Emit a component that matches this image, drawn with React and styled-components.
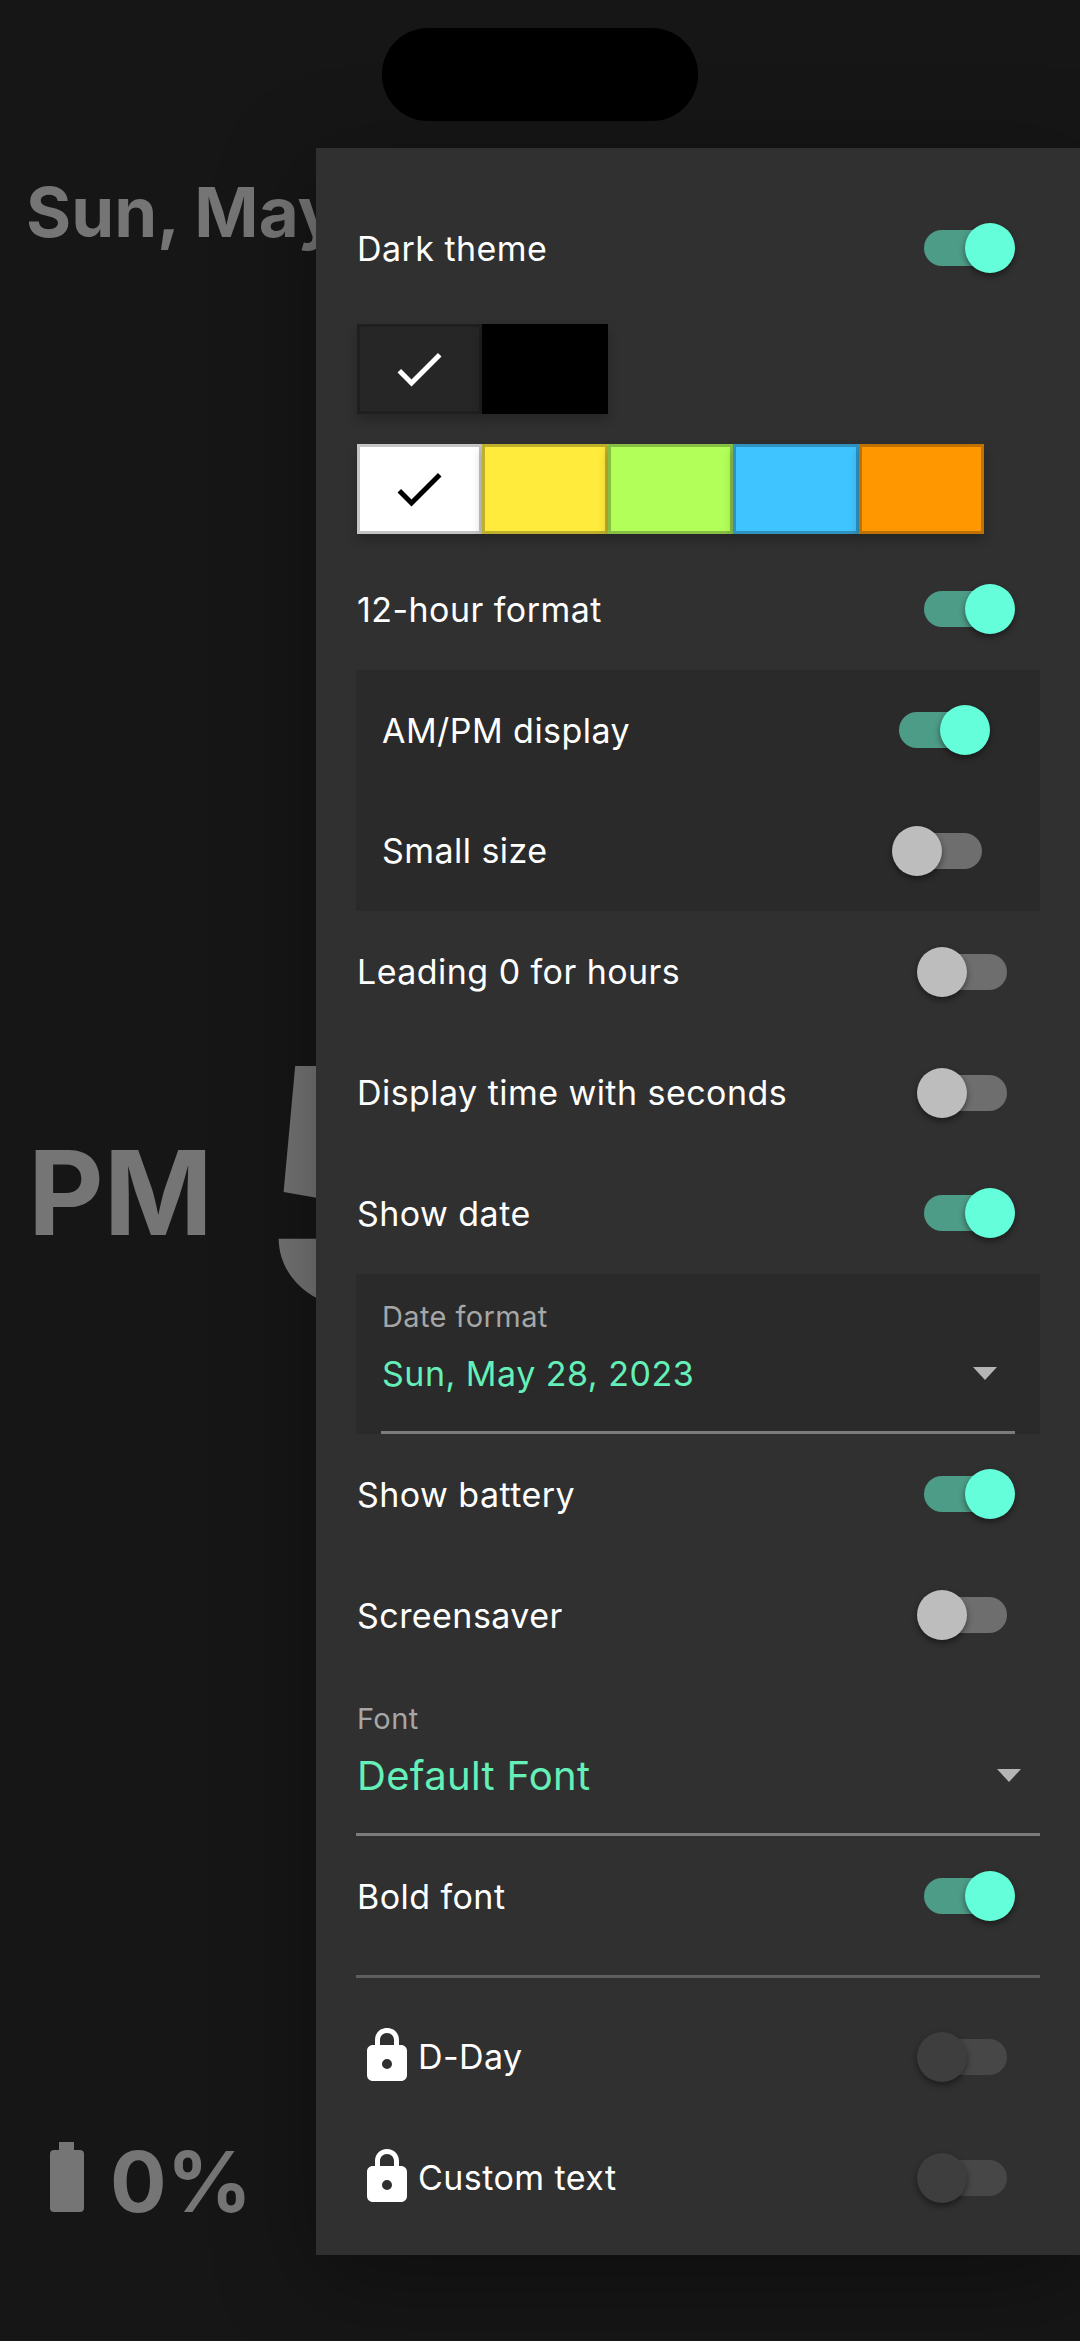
import React from 'react'
import styled, { createGlobalStyle } from 'styled-components'

const GlobalStyle = createGlobalStyle`
  body {
    margin: 0;
    background: #161616;
    font-family: 'Inter', 'Liberation Sans', sans-serif;
  }
`

const Page = styled.div`
  position: relative;
  width: 1080px;
  height: 2341px;
  overflow: hidden;
  background: #161616;
`

const Notch = styled.div`
  position: absolute;
  top: 28px;
  left: 382px;
  width: 316px;
  height: 93px;
  border-radius: 46px;
  background: #000;
`

const ClockFace = styled.div`
  height: 100%;
  box-sizing: border-box;
  padding: 170px 0 129px 28px;
  display: flex;
  flex-direction: column;
  justify-content: space-between;
  color: #757575;
  white-space: nowrap;
`

const DateLine = styled.div`
  margin-left: -2px;
  font-size: 69px;
  font-weight: 700;
  line-height: 84px;
`

const TimeLine = styled.div`
  display: flex;
  align-items: center;
  height: 300px;
  margin-bottom: 11px;
`

const Meridiem = styled.span`
  font-size: 117px;
  font-weight: 700;
  line-height: 140px;
`

const Hour = styled.span`
  font-size: 330px;
  font-weight: 700;
  line-height: 300px;
  margin: 0 0 14px 45px;
`

const BatteryLine = styled.div`
  display: flex;
  align-items: flex-end;
  gap: 26px;
  padding-left: 22px;
  font-size: 84px;
  font-weight: 700;
  line-height: 61px;

  svg {
    display: block;
    width: 34px;
    height: 70px;
  }
`

const Drawer = styled.aside`
  position: absolute;
  top: 148px;
  left: 316px;
  width: 764px;
  height: 2107px;
  box-sizing: border-box;
  padding: 40px 40px 15px;
  background: #303030;
  box-shadow: 0 24px 90px rgba(0, 0, 0, 0.35);
  color: #fff;
`

const Row = styled.div`
  display: flex;
  align-items: center;
  justify-content: space-between;
  height: 120.85px;
  padding: 0 ${p => (p.$nested ? 25 : 0)}px;
  margin-top: ${p => p.$top || 0}px;
`

const Label = styled.span`
  display: flex;
  align-items: center;
  gap: 11px;
  padding-left: 1px;
  font-size: 34px;
  letter-spacing: 0.45px;
`

const SwitchTrack = styled.span`
  position: relative;
  display: block;
  width: 83px;
  height: 36px;
  margin-right: 33px;
  border-radius: 18px;
  background: ${p => (p.$disabled ? '#474747' : p.$on ? '#4d9c87' : '#6e6e6e')};
`

const SwitchKnob = styled.span`
  position: absolute;
  top: -7px;
  left: ${p => (p.$on ? 41 : -7)}px;
  width: 50px;
  height: 50px;
  border-radius: 50%;
  background: ${p => (p.$disabled ? '#3e3e3e' : p.$on ? '#64ffda' : '#bdbdbd')};
  box-shadow: 0 3px 6px rgba(0, 0, 0, 0.45);
`

const SwatchRow = styled.div`
  display: flex;
  margin: ${p => p.$top}px 0 0 0.5px;
`

const Swatch = styled.div`
  display: flex;
  align-items: center;
  justify-content: center;
  width: 125.6px;
  height: 90px;
  box-sizing: border-box;
  border: 3px solid ${p => p.$edge};
  background: ${p => p.$color};
  box-shadow: 0 6px 10px rgba(0, 0, 0, 0.22);

  svg {
    width: 60px;
    height: 60px;
    fill: ${p => p.$check};
  }
`

const Group = styled.div`
  background: #2a2a2a;
`

const SelectBox = styled.div`
  background: ${p => (p.$nested ? '#2a2a2a' : 'transparent')};
  padding: 0 ${p => (p.$nested ? 25 : 0)}px;
`

const SelectInner = styled.div`
  height: 160px;
  box-sizing: border-box;
  padding: 25px 0 0 1px;
  border-bottom: 3px solid #7c7c7c;
`

const SelectLabel = styled.div`
  font-size: 29px;
  line-height: 36px;
  letter-spacing: 0.4px;
  color: #a6a6a6;
`

const SelectValue = styled.div`
  display: flex;
  align-items: center;
  justify-content: space-between;
  margin-top: 11px;
  font-size: ${p => (p.$large ? 40 : 34)}px;
  line-height: 56px;
  letter-spacing: ${p => (p.$large ? 0.3 : 0.5)}px;
  color: #64f0b8;
`

const Caret = styled.span`
  width: 0;
  height: 0;
  border-left: 12.5px solid transparent;
  border-right: 12.5px solid transparent;
  border-top: 13px solid #b5b5b5;
  margin-right: ${p => (p.$large ? 19 : 18)}px;
`

const Divider = styled.div`
  height: 3px;
  margin: 19px 0 18px;
  background: #5e5e5e;
`

const LockIcon = styled.svg`
  display: block;
  width: 40px;
  height: 53px;
  margin-left: 10px;
  margin-top: -4px;
  fill: #fff;
`

const Toggle = ({ on, disabled }) => (
  <SwitchTrack $on={on} $disabled={disabled}>
    <SwitchKnob $on={on} $disabled={disabled} />
  </SwitchTrack>
)

const Check = () => (
  <svg viewBox='0 0 24 24'>
    <path d='M9 16.17L4.83 12l-1.42 1.41L9 19 21 7l-1.41-1.41z' />
  </svg>
)

const Lock = () => (
  <LockIcon viewBox='0 0 40 53'>
    <path
      fillRule='evenodd'
      d='M8 17V12C8 5 13 0 20 0s12 5 12 12v5h2c3.500 0 6 2.500 6 6v24c0 3.500-2.500 6-6 6H6c-3.500 0-6-2.500-6-6V23c0-3.500 2.500-6 6-6h2zm5 0h14V12c0-4-3-7-7-7s-7 3-7 7v5zm7 14a5 5 0 1 0 0 10 5 5 0 0 0 0-10z'
    />
  </LockIcon>
)

const Battery = () => (
  <svg viewBox='0 0 34 70' fill='#757575'>
    <path d='M9 0h15v8h6c2.500 0 4 1.500 4 4v54c0 2.500-1.500 4-4 4H4c-2.500 0-4-1.500-4-4V12c0-2.500 1.500-4 4-4h5z' />
  </svg>
)

const accents = [
  { color: '#ffffff', edge: '#c4c4c4', check: '#000' },
  { color: '#ffeb3b', edge: '#bfb02c' },
  { color: '#b2ff59', edge: '#86bf43' },
  { color: '#40c4ff', edge: '#3093bf' },
  { color: '#ff9800', edge: '#bf7200' }
]

const SettingRow = ({ label, on, nested, top }) => (
  <Row $nested={nested} $top={top}>
    <Label>{label}</Label>
    <Toggle on={on} />
  </Row>
)

const LockedRow = ({ label }) => (
  <Row>
    <Label>
      <Lock />
      {label}
    </Label>
    <Toggle disabled />
  </Row>
)

export default function App() {
  return (
    <Page>
      <GlobalStyle />
      <ClockFace>
        <DateLine>Sun, May 28</DateLine>
        <TimeLine>
          <Meridiem>PM</Meridiem>
          <Hour>5</Hour>
        </TimeLine>
        <BatteryLine>
          <Battery />
          <span>0%</span>
        </BatteryLine>
      </ClockFace>
      <Notch />
      <Drawer>
        <SettingRow label='Dark theme' on />
        <SwatchRow $top={15}>
          <Swatch $color='#262626' $edge='#1f1f1f' $check='#fff'>
            <Check />
          </Swatch>
          <Swatch $color='#000' $edge='#000' />
        </SwatchRow>
        <SwatchRow $top={30}>
          {accents.map(accent => (
            <Swatch key={accent.color} $color={accent.color} $edge={accent.edge} $check={accent.check}>
              {accent.check && <Check />}
            </Swatch>
          ))}
        </SwatchRow>
        <SettingRow label='12-hour format' on top={15} />
        <Group>
          <SettingRow label='AM/PM display' on nested />
          <SettingRow label='Small size' nested />
        </Group>
        <SettingRow label='Leading 0 for hours' />
        <SettingRow label='Display time with seconds' />
        <SettingRow label='Show date' on />
        <SelectBox $nested>
          <SelectInner>
            <SelectLabel>Date format</SelectLabel>
            <SelectValue>
              Sun, May 28, 2023
              <Caret />
            </SelectValue>
          </SelectInner>
        </SelectBox>
        <SettingRow label='Show battery' on />
        <SettingRow label='Screensaver' />
        <SelectBox>
          <SelectInner>
            <SelectLabel>Font</SelectLabel>
            <SelectValue $large>
              Default Font
              <Caret $large />
            </SelectValue>
          </SelectInner>
        </SelectBox>
        <SettingRow label='Bold font' on />
        <Divider />
        <LockedRow label='D-Day' />
        <LockedRow label='Custom text' />
      </Drawer>
    </Page>
  )
}
